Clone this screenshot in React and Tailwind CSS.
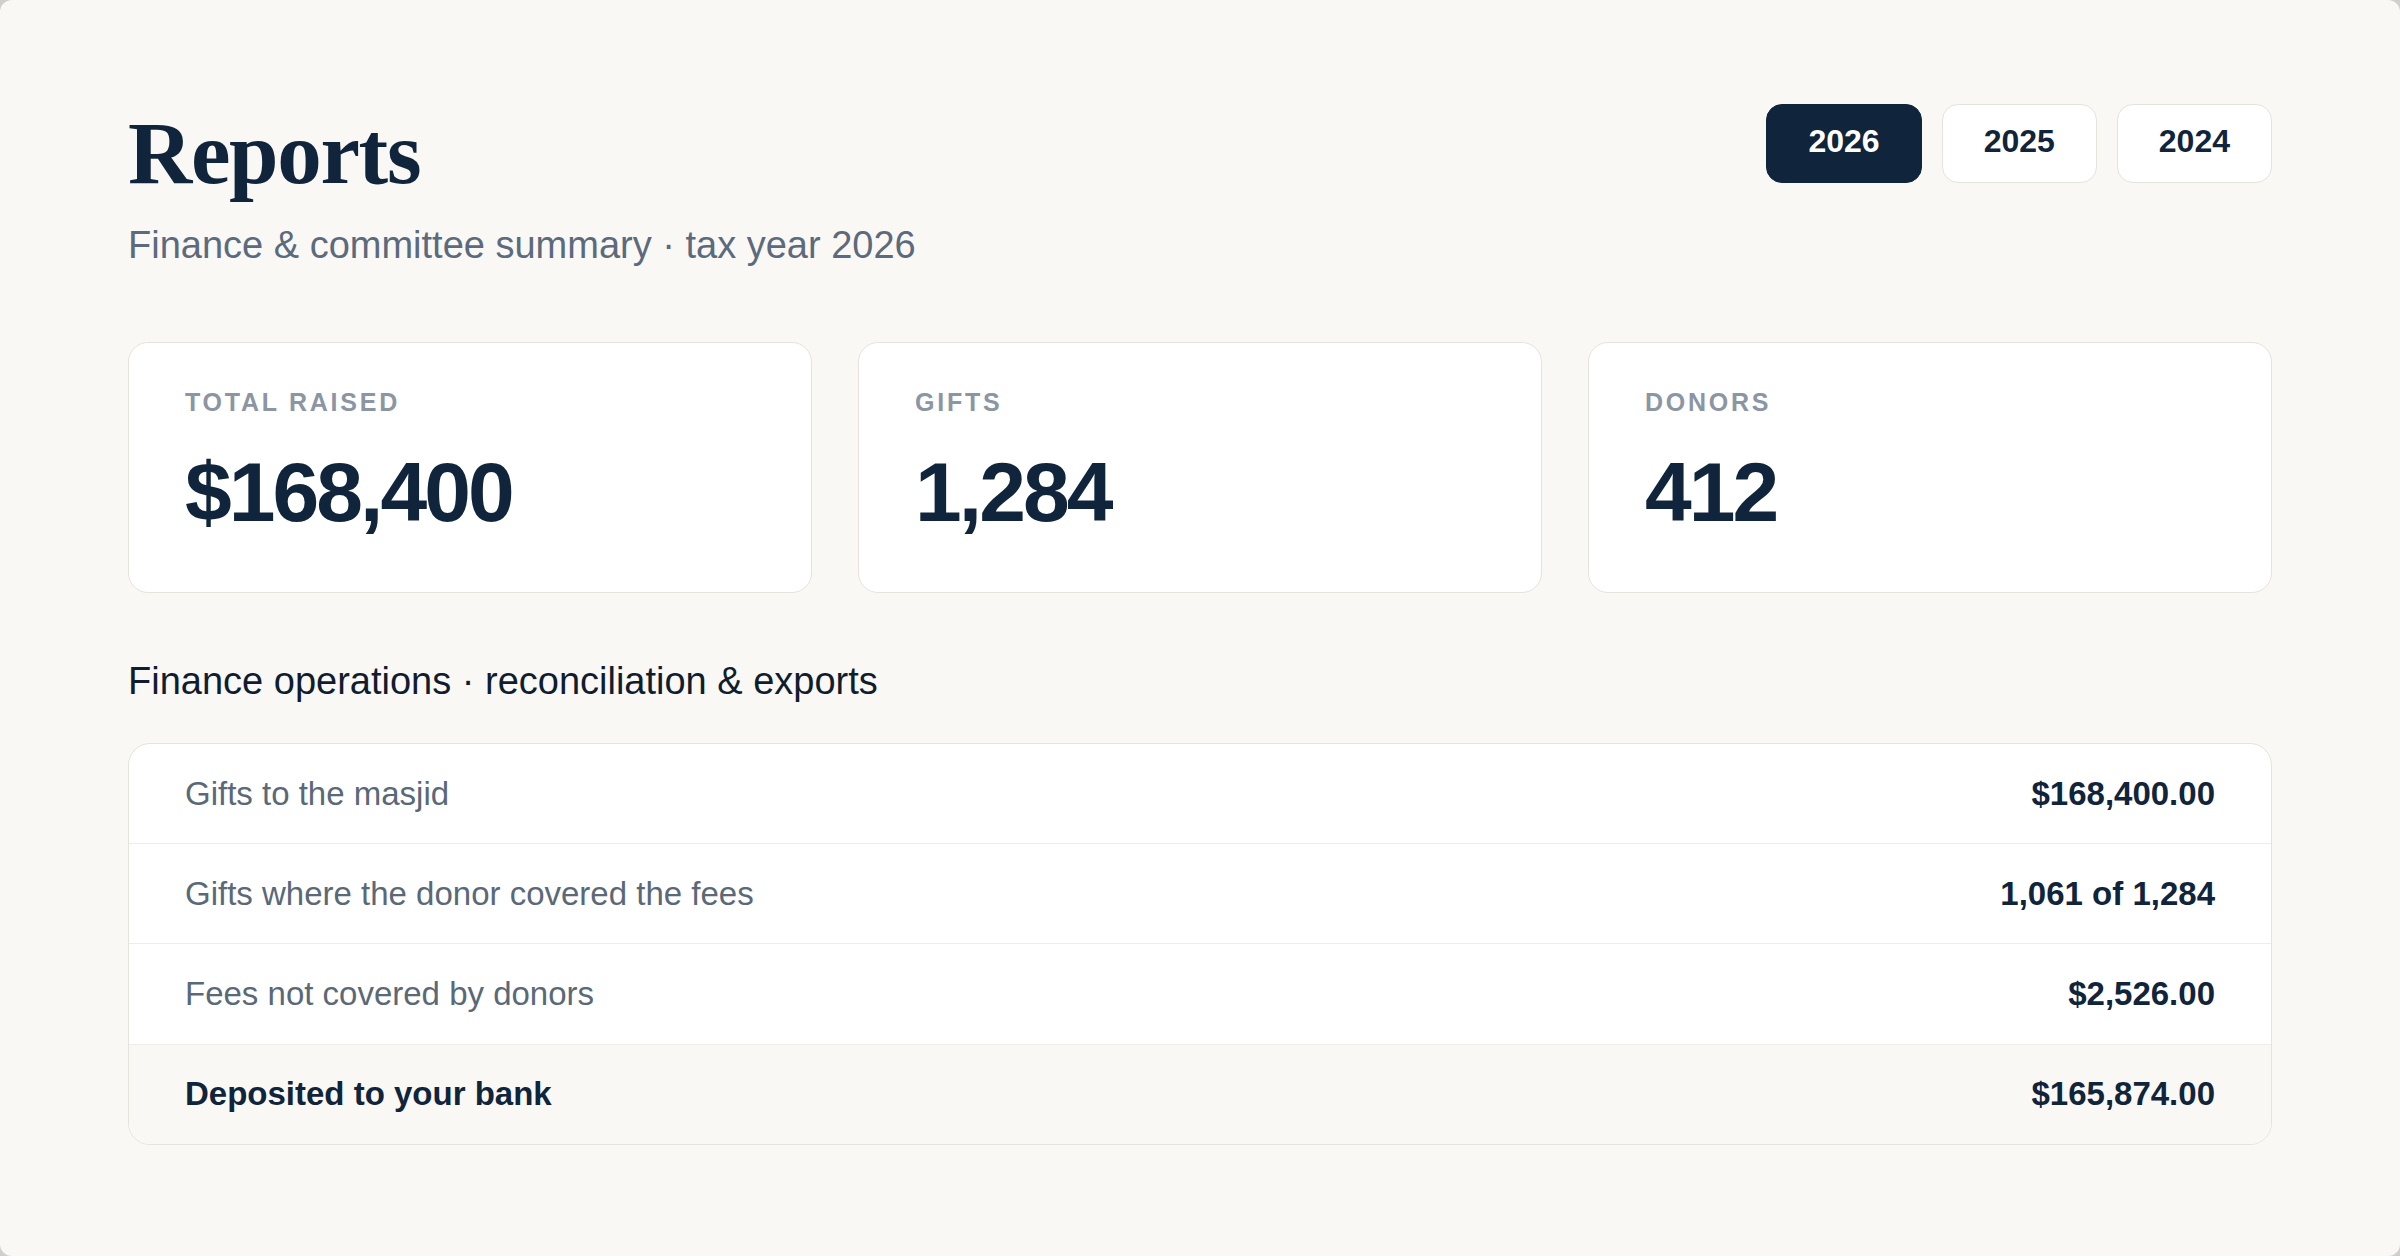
const years = ['2026', '2025', '2024']

const stats = [
  { label: 'Total raised', value: '$168,400' },
  { label: 'Gifts', value: '1,284' },
  { label: 'Donors', value: '412' }
]

const rows = [
  { label: 'Gifts to the masjid', value: '$168,400.00' },
  { label: 'Gifts where the donor covered the fees', value: '1,061 of 1,284' },
  { label: 'Fees not covered by donors', value: '$2,526.00' }
]

export default function App() {
  const active = '2026'

  return (
    <div className="min-h-screen bg-[#cfcfcf] font-['Liberation_Sans',Arial,sans-serif]">
      <div className="min-h-screen rounded-[12px] bg-[#faf8f5] px-32 pt-[104px] pb-[100px]">
        <header className="flex items-start justify-between">
          <div>
            <h1 className="font-['Liberation_Serif','Times_New_Roman',serif] text-[89px] font-bold leading-[1.12] tracking-[-0.015em] text-[#10243b]">
              Reports
            </h1>
            <p className="mt-[15px] text-[38px] leading-[1.4] text-[#5b6a7c]">
              Finance &amp; committee summary · tax year 2026
            </p>
          </div>
          <div className="flex gap-5">
            {years.map((y) => (
              <button
                key={y}
                className={`rounded-[16px] border-[1.5px] px-[41px] pt-[14px] pb-[18px] text-[32px] font-bold leading-[1.4] ${
                  y === active
                    ? 'border-[#10243b] bg-[#10243b] text-white'
                    : 'border-[#e6e3dc] bg-white text-[#10243b]'
                }`}
              >
                {y}
              </button>
            ))}
          </div>
        </header>

        <section className="mt-[70px] grid grid-cols-3 gap-[46px]">
          {stats.map((s) => (
            <div
              key={s.label}
              className="rounded-[20px] border-[1.5px] border-[#e6e3dc] bg-white px-[56px] pt-[42px] pb-[58px]"
            >
              <p className="text-[25px] font-bold uppercase leading-[1.4] tracking-[0.11em] text-[#8b95a3]">
                {s.label}
              </p>
              <p className="mt-[30px] text-[84px] font-bold leading-none tracking-[-0.035em] text-[#10243b]">
                {s.value}
              </p>
            </div>
          ))}
        </section>

        <h2 className="mt-[62px] text-[38px] leading-[1.4] text-[#0f1d2e]">
          Finance operations · reconciliation &amp; exports
        </h2>

        <div className="mt-[35px] overflow-hidden rounded-[22px] border-[1.5px] border-[#e6e3dc] bg-white">
          {rows.map((r) => (
            <div
              key={r.label}
              className="flex items-center justify-between border-b-[1.5px] border-[#efede8] px-[56px] py-[26.5px] text-[33px] leading-[1.4]"
            >
              <span className="text-[#5a6878]">{r.label}</span>
              <span className="font-bold text-[#10243b]">{r.value}</span>
            </div>
          ))}
          <div className="flex items-center justify-between bg-[#faf8f5] px-[56px] py-[26.5px] text-[33px] font-bold leading-[1.4] text-[#10243b]">
            <span>Deposited to your bank</span>
            <span>$165,874.00</span>
          </div>
        </div>
      </div>
    </div>
  )
}
